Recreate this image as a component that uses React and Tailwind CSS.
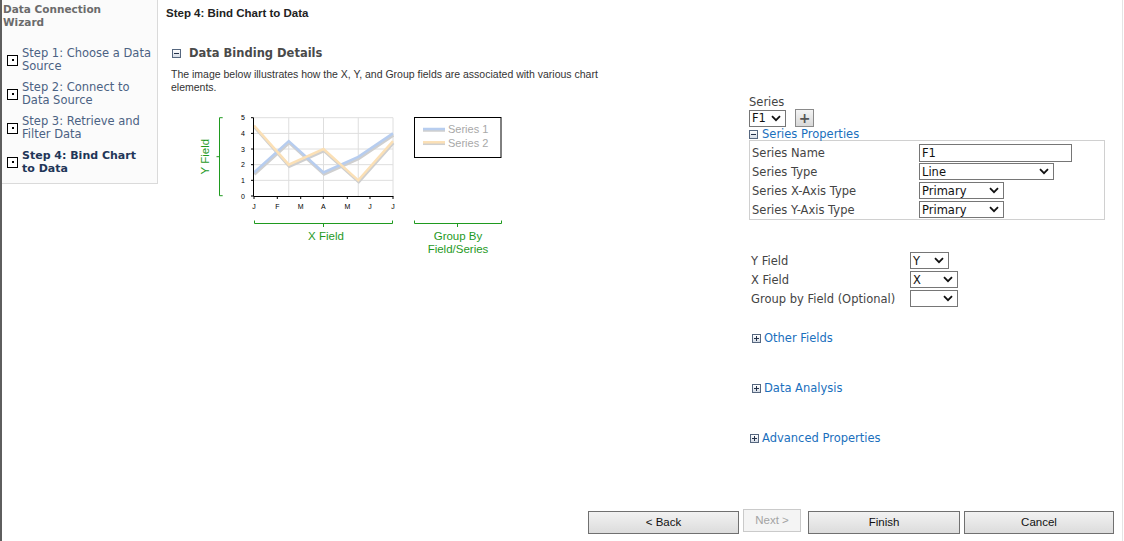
import React from "react";

const verdana = { fontFamily: '"DejaVu Sans", Verdana, sans-serif' };
const tahoma = { fontFamily: '"Liberation Sans", Tahoma, Arial, sans-serif' };

function StepIcon() {
  return (
    <div className="flex h-[11px] w-[11px] shrink-0 items-center justify-center border border-black bg-white">
      <div className="h-[2px] w-[2px] bg-black" />
    </div>
  );
}

function ToggleIcon({open}) {
  return (
    <div className="relative h-[9px] w-[9px] shrink-0 border border-[#56677f] bg-gradient-to-b from-white to-[#d5dce6]">
      <div className="absolute left-[1px] top-[3px] h-[1px] w-[5px] bg-[#24324a]" />
      {!open && (
        <div className="absolute left-[3px] top-[1px] h-[5px] w-[1px] bg-[#24324a]" />
      )}
    </div>
  );
}

function Chevron() {
  return (
    <svg width="10" height="7" viewBox="0 0 10 7" className="shrink-0">
      <path d="M1 1.2 L5 5.2 L9 1.2" fill="none" stroke="#111" strokeWidth="1.8" />
    </svg>
  );
}

function Select({value, className}) {
  return (
    <div
      className={
        "flex h-[17px] items-center justify-between border border-[#767676] bg-white pl-[2px] pr-[4px] text-[#111] " +
        className
      }
    >
      <span>{value}</span>
      <Chevron />
    </div>
  );
}

function ChartIllustration() {
  const xs = [69, 103.75, 138.5, 173.25, 208];
  const yv = (v) => 87 - 15.66 * v;
  const s1 = [1.5, 3.5, 1.5, 2.5, 4];
  const s2 = [4.5, 2, 3, 1, 3.5];
  const pts = (vals, dx = 0, dy = 0) =>
    vals.map((v, i) => `${xs[i] + dx},${yv(v) + dy}`).join(" ");
  const months = ["J", "F", "M", "A", "M", "J", "J"];
  const mx = [69, 92.3, 115.7, 138.3, 162.3, 185, 208];
  const green = "#1f9a1f";

  return (
    <svg width="335" height="150" viewBox="0 0 335 150" style={tahoma}>
      {/* grid */}
      {[1, 2, 3, 4, 5].map((v) => (
        <line key={"h" + v} x1="69" x2="208" y1={yv(v)} y2={yv(v)} stroke="#dedede" strokeWidth="1" />
      ))}
      {[103.75, 138.5, 173.25, 208].map((x) => (
        <line key={"v" + x} x1={x} x2={x} y1="8.7" y2="87" stroke="#dedede" strokeWidth="1" />
      ))}
      {/* shadows */}
      <polyline points={pts(s1, 0.5, 2)} fill="none" stroke="#cfcfcf" strokeWidth="2.5" />
      <polyline points={pts(s2, 0.5, 2)} fill="none" stroke="#cfcfcf" strokeWidth="2.5" />
      <polyline points={pts(s1)} fill="none" stroke="#b7cdef" strokeWidth="2.5" />
      <polyline points={pts(s2)} fill="none" stroke="#fbe0b6" strokeWidth="2.5" />
      {/* axes */}
      <line x1="68.5" x2="68.5" y1="8.7" y2="87.5" stroke="#000" strokeWidth="1" />
      <line x1="68.5" x2="208.5" y1="87.5" y2="87.5" stroke="#000" strokeWidth="1" />
      {[0, 1, 2, 3, 4, 5].map((v) => (
        <g key={"yl" + v}>
          <line x1="66" x2="68.5" y1={yv(v)} y2={yv(v)} stroke="#000" />
          <text x="58" y={yv(v) + 2.5} fontSize="7" textAnchor="middle" fill="#000">
            {v}
          </text>
        </g>
      ))}
      {months.map((m, i) => (
        <g key={"m" + i}>
          <line x1={mx[i]} x2={mx[i]} y1="87.5" y2="90" stroke="#000" />
          <text x={mx[i]} y="100" fontSize="7" textAnchor="middle" fill="#000">
            {m}
          </text>
        </g>
      ))}
      {/* Y bracket */}
      <path d="M37.7 8.7 H34.5 V86.7 H37.7 M34.5 47.7 H31.5" fill="none" stroke={green} strokeWidth="1" />
      <text
        x="20"
        y="47.7"
        fontSize="11.5"
        fill={green}
        textAnchor="middle"
        dominantBaseline="central"
        transform="rotate(-90 20 47.7)"
      >
        Y Field
      </text>
      {/* X bracket */}
      <path d="M69.5 111.5 V114.5 H207.5 V111.5 M138.5 114.5 V118" fill="none" stroke={green} strokeWidth="1" />
      <text x="141" y="131" fontSize="11.5" fill={green} textAnchor="middle">
        X Field
      </text>
      {/* Group bracket */}
      <path d="M229.5 111.5 V114.5 H316.5 V111.5 M272.5 114.5 V118" fill="none" stroke={green} strokeWidth="1" />
      <text x="273" y="131" fontSize="11.5" fill={green} textAnchor="middle">
        Group By
      </text>
      <text x="273" y="144" fontSize="11.5" fill={green} textAnchor="middle">
        Field/Series
      </text>
      {/* legend */}
      <rect x="229.5" y="8.5" width="86.5" height="40" fill="#fff" stroke="#000" strokeWidth="1" />
      <line x1="238" x2="260" y1="21.5" y2="21.5" stroke="#cfcfcf" strokeWidth="2.5" />
      <line x1="238" x2="260" y1="20" y2="20" stroke="#b7cdef" strokeWidth="2.5" />
      <text x="263" y="24" fontSize="11" fill="#a8a8a8">
        Series 1
      </text>
      <line x1="238" x2="260" y1="34.8" y2="34.8" stroke="#cfcfcf" strokeWidth="2.5" />
      <line x1="238" x2="260" y1="33.3" y2="33.3" stroke="#fbe0b6" strokeWidth="2.5" />
      <text x="263" y="37.5" fontSize="11" fill="#a8a8a8">
        Series 2
      </text>
    </svg>
  );
}

function PropRow({label, children, labelW}) {
  return (
    <div className="flex h-[17px] items-center">
      <div className={"shrink-0 pl-[2px] text-[#444] " + labelW}>{label}</div>
      {children}
    </div>
  );
}

function ExpandLink({label, className}) {
  return (
    <div className={"flex items-center gap-[3px] text-[#1a6fbd] " + className}>
      <ToggleIcon open={false} />
      <span>{label}</span>
    </div>
  );
}

function WizButton({label, className, disabled}) {
  return (
    <button
      className={
        "h-[23px] border text-[11.5px] " +
        (disabled
          ? "border-[#cacaca] bg-[#f4f4f4] text-[#a3a3a3] "
          : "border-[#707070] bg-gradient-to-b from-[#f2f2f2] to-[#dcdcdc] text-[#111] ") +
        className
      }
      style={tahoma}
    >
      {label}
    </button>
  );
}

export default function App() {
  const steps = [
    ["Step 1: Choose a Data", "Source"],
    ["Step 2: Connect to", "Data Source"],
    ["Step 3: Retrieve and", "Filter Data"],
  ];

  return (
    <div className="flex h-[541px] w-[1124px] overflow-hidden bg-white pr-[1px]" style={verdana}>
      {/* left wizard navigation */}
      <div className="w-[158px] shrink-0 border-l-2 border-[#5e5e5e]">
        <div className="h-[184px] border-b border-r border-[#dadada] bg-[#fbfbfb] pl-[1px] pt-[3px]">
          <div className="text-[10.5px] font-bold leading-[13px] text-[#6b6b6b]">
            Data Connection
            <br />
            Wizard
          </div>
          <div className="mt-[18px] flex flex-col gap-[8px]">
            {steps.map(([a, b]) => (
              <div key={a} className="flex items-center gap-[4px] pl-[4px]">
                <StepIcon />
                <div className="text-[11.5px] leading-[13px] text-[#4b6283]">
                  {a}
                  <br />
                  {b}
                </div>
              </div>
            ))}
            <div className="flex items-center gap-[4px] pl-[4px]">
              <StepIcon />
              <div className="text-[11px] font-bold leading-[13px] text-[#1f3658]">
                Step 4: Bind Chart
                <br />
                to Data
              </div>
            </div>
          </div>
        </div>
      </div>

      {/* main content */}
      <div className="ml-[8px] flex flex-1 flex-col border-r border-[#e4e4e4]">
        <div className="h-[26px] pt-[5px] text-[11.5px] font-bold leading-[16px] text-[#222]" style={tahoma}>
          Step 4: Bind Chart to Data
        </div>

        <div className="flex flex-1">
          <div className="w-[583px] shrink-0">
            <div className="mt-[19px] flex items-center gap-[8px] pl-[6px]">
              <ToggleIcon open={true} />
              <span className="text-[11.5px] font-bold leading-[16px] text-[#4a4a4a]">Data Binding Details</span>
            </div>
            <div
              className="mt-[7px] w-[455px] pl-[5px] text-[10.5px] leading-[13px] text-[#333]"
              style={tahoma}
            >
              The image below illustrates how the X, Y, and Group fields are associated with various chart
              elements.
            </div>
            <div className="ml-[19px] mt-[15px]">
              <ChartIllustration />
            </div>
          </div>

          <div className="w-[357px] shrink-0 pt-[69px] text-[11.5px] leading-[14px]">
            <div className="text-[#444]">Series</div>
            <div className="flex items-center gap-[9px]">
              <Select value="F1" className="w-[37px]" />
              <div className="flex h-[18px] w-[19px] items-center justify-center border border-[#8a8a8a] bg-gradient-to-b from-[#f4f4f4] to-[#d8d8d8] text-[14px] font-bold leading-none text-[#555]">
                +
              </div>
            </div>
            <div className="flex items-center gap-[4px] text-[#1a6fbd]">
              <ToggleIcon open={true} />
              <span>Series Properties</span>
            </div>
            <div className="-mt-[1px] flex w-[356px] flex-col gap-[2px] border border-[#d0d0d0] pb-[1px] pt-[3px]">
              <PropRow label="Series Name" labelW="w-[169px]">
                <div className="h-[18px] w-[153px] border border-[#767676] bg-white pl-[2px] leading-[16px] text-[#111]">
                  F1
                </div>
              </PropRow>
              <PropRow label="Series Type" labelW="w-[169px]">
                <Select value="Line" className="w-[135px]" />
              </PropRow>
              <PropRow label="Series X-Axis Type" labelW="w-[169px]">
                <Select value="Primary" className="w-[85px]" />
              </PropRow>
              <PropRow label="Series Y-Axis Type" labelW="w-[169px]">
                <Select value="Primary" className="w-[85px]" />
              </PropRow>
            </div>

            <div className="mt-[32px] flex flex-col gap-[2px] pl-[0px]">
              <PropRow label="Y Field" labelW="w-[161px]">
                <Select value="Y" className="w-[39px]" />
              </PropRow>
              <PropRow label="X Field" labelW="w-[161px]">
                <Select value="X" className="w-[48px]" />
              </PropRow>
              <PropRow label="Group by Field (Optional)" labelW="w-[161px]">
                <Select value="" className="w-[48px]" />
              </PropRow>
            </div>

            <ExpandLink label="Other Fields" className="mt-[24px] pl-[3px]" />
            <ExpandLink label="Data Analysis" className="mt-[36px] pl-[3px]" />
            <ExpandLink label="Advanced Properties" className="mt-[36px] pl-[1px]" />
          </div>
        </div>

        <div className="flex items-end justify-end pb-[7px] pr-[8px]">
          <WizButton label="< Back" className="w-[151px]" />
          <WizButton label="Next >" className="mb-[2px] ml-[4px] w-[58px]" disabled />
          <WizButton label="Finish" className="ml-[7px] w-[152px]" />
          <WizButton label="Cancel" className="ml-[4px] w-[150px]" />
        </div>
      </div>
    </div>
  );
}
